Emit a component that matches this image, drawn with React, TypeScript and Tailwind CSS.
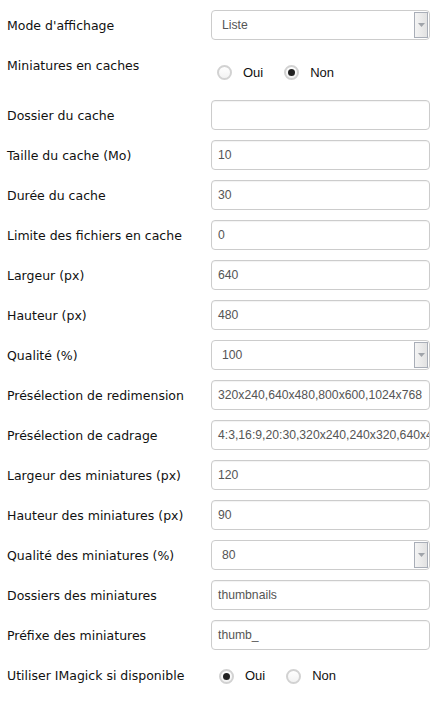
import React from "react";

type Row =
  | { label: string; kind: "input"; value: string }
  | { label: string; kind: "select"; value: string }
  | { label: string; kind: "radio"; value: "oui" | "non"; first?: boolean };

const rows: Row[] = [
  { label: "Mode d'affichage", kind: "select", value: "Liste" },
  { label: "Miniatures en caches", kind: "radio", value: "non", first: true },
  { label: "Dossier du cache", kind: "input", value: "" },
  { label: "Taille du cache (Mo)", kind: "input", value: "10" },
  { label: "Durée du cache", kind: "input", value: "30" },
  { label: "Limite des fichiers en cache", kind: "input", value: "0" },
  { label: "Largeur (px)", kind: "input", value: "640" },
  { label: "Hauteur (px)", kind: "input", value: "480" },
  { label: "Qualité (%)", kind: "select", value: "100" },
  { label: "Présélection de redimension", kind: "input", value: "320x240,640x480,800x600,1024x768" },
  { label: "Présélection de cadrage", kind: "input", value: "4:3,16:9,20:30,320x240,240x320,640x480" },
  { label: "Largeur des miniatures (px)", kind: "input", value: "120" },
  { label: "Hauteur des miniatures (px)", kind: "input", value: "90" },
  { label: "Qualité des miniatures (%)", kind: "select", value: "80" },
  { label: "Dossiers des miniatures", kind: "input", value: "thumbnails" },
  { label: "Préfixe des miniatures", kind: "input", value: "thumb_" },
  { label: "Utiliser IMagick si disponible", kind: "radio", value: "oui" },
];

const labelFont = { fontFamily: "'DejaVu Sans', Verdana, sans-serif" };
const fieldFont = { fontFamily: "'Liberation Sans', Arial, sans-serif" };

function Radio({ checked }: { checked: boolean }) {
  return (
    <span className="w-[15px] h-[15px] rounded-full border-2 border-[#d2d2d2] bg-gradient-to-b from-white to-[#f2f2f2] flex items-center justify-center shrink-0">
      {checked && <span className="w-[7px] h-[7px] rounded-full bg-[#222]" />}
    </span>
  );
}

function Control({ row }: { row: Row }) {
  if (row.kind === "input") {
    return (
      <div
        className="w-[219px] h-[30px] border border-[#cccccc] rounded-[4px] bg-white flex items-center pl-[6px] overflow-hidden whitespace-nowrap text-[12.2px] text-[#555555] shadow-[inset_0_1px_1px_rgba(0,0,0,0.05)]"
        style={fieldFont}
      >
        {row.value}
      </div>
    );
  }
  if (row.kind === "select") {
    return (
      <div
        className="w-[219px] h-[30px] border border-[#cccccc] rounded-[4px] bg-white flex items-center pl-[10px] pr-[1px] text-[12.2px] text-[#555555]"
        style={fieldFont}
      >
        <span className="flex-1">{row.value}</span>
        <span className="w-[14px] h-[26px] border border-[#a9aeb8] bg-gradient-to-r from-[#f4f4f4] to-[#e2e2e2] flex items-center justify-center">
          <svg width="7" height="4" viewBox="0 0 7 4">
            <path d="M0 0 L7 0 L3.5 4 Z" fill="#a0a4aa" />
          </svg>
        </span>
      </div>
    );
  }
  const first = row.first;
  return (
    <div
      className={
        "flex items-center text-[13px] text-[#111] " +
        (first ? "h-[40px] pt-[5px] pl-[6px]" : "h-[30px] pl-[8px] mt-[1px]")
      }
      style={fieldFont}
    >
      <Radio checked={row.value === "oui"} />
      <span className="ml-[11px] mr-[21px]">Oui</span>
      <Radio checked={row.value === "non"} />
      <span className="ml-[11px]">Non</span>
    </div>
  );
}

export default function App() {
  return (
    <div className="w-[440px] h-[701px] bg-white pt-[10px] pl-[7px] flex flex-col gap-[10px]">
      {rows.map((row, i) => (
        <div key={i} className={"flex items-start " + (row.kind === "radio" && row.first ? "h-[40px]" : "h-[30px]")}>
          <div
            className={"w-[204px] shrink-0 text-[12.5px] text-[#111] " + (row.kind === "radio" && row.first ? "leading-[32px]" : "leading-[31px]")}
            style={labelFont}
          >
            {row.label}
          </div>
          <Control row={row} />
        </div>
      ))}
    </div>
  );
}
